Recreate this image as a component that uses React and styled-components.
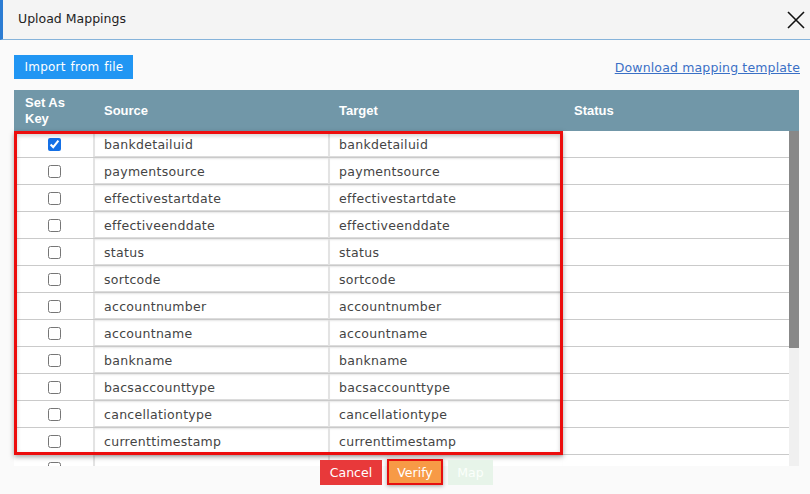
import React from 'react';
import styled, { createGlobalStyle } from 'styled-components';

const fields = [
  'bankdetailuid',
  'paymentsource',
  'effectivestartdate',
  'effectiveenddate',
  'status',
  'sortcode',
  'accountnumber',
  'accountname',
  'bankname',
  'bacsaccounttype',
  'cancellationtype',
  'currenttimestamp',
  '',
];

function App() {
  return (
    <>
      <GlobalStyle />
      <Dialog>
        <Header>
          <Title>Upload Mappings</Title>
          <CloseButton aria-label="Close">
            <svg width="18" height="18" viewBox="0 0 18 18">
              <path d="M1 1 L17 17 M17 1 L1 17" stroke="#111" strokeWidth="1.6" fill="none" />
            </svg>
          </CloseButton>
        </Header>
        <Body>
          <Toolbar>
            <ImportButton>Import from file</ImportButton>
            <DownloadLink href="#">Download mapping template</DownloadLink>
          </Toolbar>
          <Table>
            <HeadRow>
              <HeadCell>Set As Key</HeadCell>
              <HeadCell>Source</HeadCell>
              <HeadCell>Target</HeadCell>
              <HeadCell>Status</HeadCell>
            </HeadRow>
            <BodyWrap>
              <Rows>
                {fields.map((name, i) => (
                  <Row key={i}>
                    <CheckCell>
                      <Check type="checkbox" defaultChecked={i === 0} />
                    </CheckCell>
                    <Field>{name}</Field>
                    <Field>{name}</Field>
                    <StatusCell />
                  </Row>
                ))}
              </Rows>
              <Scrollbar>
                <Thumb />
              </Scrollbar>
              <Highlight />
            </BodyWrap>
          </Table>
        </Body>
        <Footer>
          <CancelButton>Cancel</CancelButton>
          <VerifyButton>Verify</VerifyButton>
          <MapButton>Map</MapButton>
        </Footer>
      </Dialog>
    </>
  );
}

export default App;

const GlobalStyle = createGlobalStyle`
  body {
    margin: 0;
    background: #fafafa;
    font-family: "DejaVu Sans", sans-serif;
  }
`;

const Dialog = styled.div`
  width: 810px;
  height: 494px;
  display: flex;
  flex-direction: column;
  background: #fafafa;
  overflow: hidden;
`;

const Header = styled.div`
  height: 39px;
  display: flex;
  align-items: center;
  justify-content: space-between;
  padding: 0 5px 0 15px;
  background: #f4f4f4;
  border-left: 3px solid #2b7cd3;
  border-bottom: 1px solid #86b3da;
`;

const Title = styled.h1`
  margin: 0 0 2px;
  font-size: 12.5px;
  font-weight: normal;
  color: #222;
`;

const CloseButton = styled.button`
  display: flex;
  padding: 0;
  margin-top: 1px;
  border: none;
  background: none;
`;

const Body = styled.div`
  padding: 0 11px 0 14px;
`;

const Toolbar = styled.div`
  display: flex;
  align-items: center;
  justify-content: space-between;
  margin-top: 15px;
  margin-right: -1px;
`;

const ImportButton = styled.button`
  width: 119px;
  height: 24px;
  padding: 0 0 0 1px;
  border: none;
  background: #2196f3;
  color: #fff;
  font-family: "DejaVu Sans", sans-serif;
  font-size: 12px;
  letter-spacing: 0.2px;
  word-spacing: 1px;
`;

const DownloadLink = styled.a`
  color: #3a70c6;
  font-size: 12.5px;
  letter-spacing: 0.15px;
  text-decoration: underline;
`;

const Table = styled.div`
  margin-top: 11px;
`;

const columns = '79px 235px 235px 1fr';

const HeadRow = styled.div`
  display: grid;
  grid-template-columns: ${columns};
  height: 41px;
  background: #7197a8;
`;

const HeadCell = styled.div`
  display: flex;
  align-items: center;
  padding: 1px 11px 0;
  color: #fff;
  font-family: "Liberation Sans", Arial, sans-serif;
  font-size: 13px;
  font-weight: bold;
  line-height: 16px;
`;

const BodyWrap = styled.div`
  position: relative;
  display: flex;
  height: 335px;
`;

const Rows = styled.div`
  flex: 1;
  overflow: hidden;
  background: #fff;
`;

const Row = styled.div`
  display: grid;
  grid-template-columns: ${columns};
  height: 27px;
  box-sizing: border-box;
  border-bottom: 1px solid #cacaca;
`;

const CheckCell = styled.div`
  display: flex;
  align-items: center;
  justify-content: center;
  padding-top: 1px;
`;

const Check = styled.input`
  width: 13px;
  height: 13px;
  margin: 0 0 0 2px;
  accent-color: #1470e6;
`;

const Field = styled.div`
  display: flex;
  align-items: center;
  padding: 2px 0 0 9px;
  border-left: 2px solid #e3e3e3;
  border-bottom: 1px solid #dcdcdc;
  box-shadow: inset 0 2px 2px -1px rgba(0, 0, 0, 0.1);
  color: #444;
  font-size: 12.5px;
  letter-spacing: 0.3px;
`;

const StatusCell = styled.div``;

const Scrollbar = styled.div`
  width: 10px;
  background: #f0f0f0;
`;

const Thumb = styled.div`
  height: 217px;
  background: #888;
`;

const Highlight = styled.div`
  position: absolute;
  left: 0;
  top: 0;
  width: 549px;
  height: 324px;
  box-sizing: border-box;
  border: 3px solid #ec0d0d;
  box-shadow: 0 2px 5px rgba(0, 0, 0, 0.35), inset 0 2px 4px rgba(0, 0, 0, 0.18);
  pointer-events: none;
`;

const Footer = styled.div`
  position: relative;
  display: flex;
  justify-content: center;
  gap: 5px;
  margin-top: -6px;
  padding-left: 3px;
`;

const FooterButton = styled.button`
  height: 25px;
  padding: 0;
  border: none;
  color: #fff;
  font-family: "DejaVu Sans", sans-serif;
  font-size: 12.5px;
`;

const CancelButton = styled(FooterButton)`
  width: 62px;
  background: #e8393a;
`;

const VerifyButton = styled(FooterButton)`
  width: 56px;
  height: 26px;
  margin-top: -1px;
  border: 2px solid #e60f0f;
  background: #f79a46;
  box-shadow: 0 1px 4px rgba(0, 0, 0, 0.35);
`;

const MapButton = styled(FooterButton)`
  width: 45px;
  background: #e7f4e9;
  color: #fbfffb;
`;
